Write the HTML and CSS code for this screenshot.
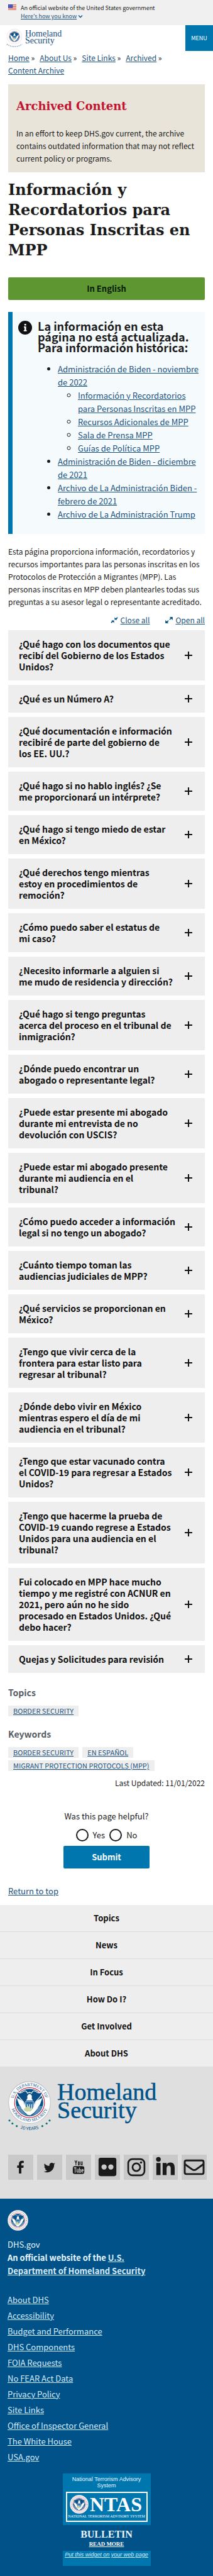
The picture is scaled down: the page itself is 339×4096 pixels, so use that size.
FILE: index.html
```html
<!DOCTYPE html>
<html lang="es">
<head>
<meta charset="utf-8">
<meta name="viewport" content="width=device-width, initial-scale=1">
<title>Información y Recordatorios para Personas Inscritas en MPP</title>
<link rel="stylesheet" href="styles.css">
</head>
<body>
<svg class="defs" aria-hidden="true">
  <symbol id="emblem" viewBox="0 0 100 100">
    <circle cx="50" cy="50" r="49" fill="#fff" stroke="#b9bfc6" stroke-width="1.5"/>
    <circle cx="50" cy="50" r="35" fill="#fff" stroke="#c41230" stroke-width="1.5"/>
    <circle cx="50" cy="50" r="32" fill="#005288"/>
    <path d="M20 39Q28 68 48 80L55 76Q40 62 34 46Z" fill="#fff"/>
    <path d="M80 39Q72 68 52 80L45 76Q60 62 66 46Z" fill="#fff"/>
    <path d="M20 58Q25 76 44 80Q33 71 29 58Z M80 58Q75 76 56 80Q67 71 71 58Z" fill="#5b8db8"/>
    <path d="M18 24Q28 31 35 24Q42 20 45 28L50 26L55 28Q58 20 65 24Q72 31 82 24Q76 37 67 45Q60 51 60 62L50 70L40 62Q40 51 33 45Q24 37 18 24Z" fill="#0b4f86" stroke="#fff" stroke-width="1.6"/>
    <path d="M45 40Q43 32 50 30Q57 31 55 40L58 45H42Z" fill="#fff"/>
    <path d="M41 47H59V60Q58 67 50 71Q42 67 41 60Z" fill="#2a6ea6" stroke="#fff"/>
    <path d="M45 54V66M50 54V70M55 54V66" stroke="#fff" stroke-width="1.8"/>
    <path d="M36 65L47 58L56 66L50 73L39 70Z" fill="#c9d8a0"/>
    <path d="M47 70L56 73L51 80L43 78Z" fill="#fff"/>
  </symbol>
</svg>

<section class="gov-banner" aria-label="Official website of the United States government">
  <svg class="flag" viewBox="0 0 16 11" aria-hidden="true">
    <path fill="#fff" d="M0 0h16v11H0z"/>
    <path fill="#db3e1f" d="M0 0h16v1H0zM0 2h16v1H0zM0 4h16v1H0zM0 6h16v1H0zM0 8h16v1H0zM0 10h16v1H0z"/>
    <path fill="#1e33b1" d="M0 0h9v7H0z"/>
    <path stroke="#fff" stroke-dasharray="1 1" stroke-width=".8" d="M1 1.5h7M1 3.5h7M1 5.5h7"/>
  </svg>
  <div>
    <div>An official website of the United States government</div>
    <a href="#know">Here's how you know</a>
    <svg class="chevron" viewBox="0 0 8 6" aria-hidden="true"><path d="M1 1.5l3 3 3-3" fill="none" stroke="#005288" stroke-width="1.3"/></svg>
  </div>
</section>

<header class="site-header" id="top">
  <a class="brand" href="#home" aria-label="Homeland Security">
    <svg class="emblem-sm" viewBox="0 0 30 34" aria-hidden="true">
      <use href="#emblem" x="2" y="1" width="26" height="26"/>
      <path d="M2 27Q15 35 28 27" fill="none" stroke="#7393ab" stroke-width="1.5" stroke-dasharray="1.5 1.5"/>
    </svg>
    <span class="brand-name">Homeland<br>Security</span>
  </a>
  <button class="menu-btn" type="button">Menu</button>
</header>

<main class="content">
  <nav class="crumbs" aria-label="Breadcrumb">
    <span><a href="#home">Home</a> »</span>
    <span><a href="#about">About Us</a> »</span>
    <span><a href="#links">Site Links</a> »</span>
    <span><a href="#archived">Archived</a> »</span>
    <span><a href="#archive">Content Archive</a></span>
  </nav>

  <aside class="archived">
    <h2>Archived Content</h2>
    <p>In an effort to keep DHS.gov current, the archive contains outdated information that may not reflect current policy or programs.</p>
  </aside>

  <h1>Información y Recordatorios para Personas Inscritas en MPP</h1>

  <a class="lang-btn" href="#english">In English</a>

  <section class="notice">
    <svg class="info" viewBox="0 0 22 22" aria-hidden="true"><circle cx="11" cy="11" r="11" fill="#111"/><path d="M9.8 5h2.8v2.4H9.8zM9 9h3.6v6h1v1.8H8.8V15h1.1v-4.2H9z" fill="#fff"/></svg>
    <div>
      <h3>La información en esta página no está actualizada. Para información histórica:</h3>
      <ul>
        <li><a href="#n22">Administración de Biden - noviembre de 2022</a>
          <ul>
            <li><a href="#i">Información y Recordatorios para Personas Inscritas en MPP</a></li>
            <li><a href="#r">Recursos Adicionales de MPP</a></li>
            <li><a href="#s">Sala de Prensa MPP</a></li>
            <li><a href="#g">Guías de Política MPP</a></li>
          </ul>
        </li>
        <li><a href="#d21">Administración de Biden - diciembre de 2021</a></li>
        <li><a href="#f21">Archivo de La Administración Biden - febrero de 2021</a></li>
        <li><a href="#t">Archivo de La Administración Trump</a></li>
      </ul>
    </div>
  </section>

  <p class="intro">Esta página proporciona información, recordatorios y recursos importantes para las personas inscritas en los Protocolos de Protección a Migrantes (MPP). Las personas inscritas en MPP deben plantearles todas sus preguntas a su asesor legal o representante acreditado.</p>

  <div class="toggles">
    <a href="#close"><svg viewBox="0 0 14 12" aria-hidden="true"><path d="M1 11l3-3M13 1l-3 3" stroke="#005288" stroke-width="2"/><path d="M1.500 6.500h5v5zM7.500 .5v5h5z" fill="#005288"/></svg><span>Close all</span></a>
    <a href="#open"><svg viewBox="0 0 14 12" aria-hidden="true"><path d="M2 10l4-3M12 2l-4 3" stroke="#005288" stroke-width="2"/><path d="M0 6v6h6zM8 0h6v6z" fill="#005288"/></svg><span>Open all</span></a>
  </div>

  <div class="accordion">
    <button type="button"><span>¿Qué hago con los documentos que recibí del Gobierno de los Estados Unidos?</span></button>
    <button type="button"><span>¿Qué es un Número A?</span></button>
    <button type="button"><span>¿Qué documentación e información recibiré de parte del gobierno de los&nbsp;EE.&nbsp;UU.?</span></button>
    <button type="button"><span>¿Qué hago si no hablo inglés? ¿Se me&nbsp;proporcionará un intérprete?</span></button>
    <button type="button"><span>¿Qué hago si tengo miedo de estar en México?</span></button>
    <button type="button"><span>¿Qué derechos tengo mientras estoy&nbsp;en procedimientos de remoción?</span></button>
    <button type="button"><span>¿Cómo puedo saber el estatus de mi&nbsp;caso?</span></button>
    <button type="button"><span>¿Necesito informarle a alguien si me&nbsp;mudo de residencia y dirección?</span></button>
    <button type="button"><span>¿Qué hago si tengo preguntas acerca&nbsp;del proceso en el tribunal de inmigración?</span></button>
    <button type="button"><span>¿Dónde puedo encontrar un abogado o representante legal?</span></button>
    <button type="button"><span>¿Puede estar presente mi abogado durante mi entrevista de no devolución con USCIS?</span></button>
    <button type="button"><span>¿Puede estar mi abogado presente durante mi audiencia en el<br>tribunal?</span></button>
    <button type="button"><span>¿Cómo puedo acceder a información legal si no tengo un abogado?</span></button>
    <button type="button"><span>¿Cuánto tiempo toman las audiencias judiciales de MPP?</span></button>
    <button type="button"><span>¿Qué servicios se proporcionan en México?</span></button>
    <button type="button"><span>¿Tengo que vivir cerca de la frontera&nbsp;para estar listo para regresar al tribunal?</span></button>
    <button type="button"><span>¿Dónde debo vivir en México mientras espero el día de mi audiencia en el tribunal?</span></button>
    <button type="button"><span>¿Tengo que estar vacunado contra el&nbsp;COVID-19 para regresar a Estados Unidos?</span></button>
    <button type="button"><span>¿Tengo que hacerme la prueba de COVID-19 cuando regrese a Estados Unidos para una audiencia en el tribunal?</span></button>
    <button type="button"><span>Fui colocado en MPP hace mucho tiempo y me registré con ACNUR en 2021, pero aún no he sido procesado en Estados Unidos. ¿Qué debo hacer?</span></button>
    <button type="button"><span>Quejas y Solicitudes para revisión</span></button>
  </div>

  <section class="tags">
    <h4>Topics</h4>
    <div class="tag-list"><a href="#bs">Border Security</a></div>
    <h4>Keywords</h4>
    <div class="tag-list"><a href="#bs">Border Security</a><a href="#es">En Español</a><a href="#mpp">Migrant Protection Protocols (MPP)</a></div>
  </section>
  <p class="updated">Last Updated: 11/01/2022</p>

  <form class="feedback">
    <fieldset>
      <legend>Was this page helpful?</legend>
      <div class="choices">
        <label><input type="radio" name="helpful" value="yes">Yes</label>
        <label><input type="radio" name="helpful" value="no">No</label>
      </div>
    </fieldset>
    <button type="button">Submit</button>
  </form>

  <a class="to-top" href="#top">Return to top</a>
</main>

<footer>
  <nav class="foot-nav" aria-label="Footer">
    <a href="#topics">Topics</a>
    <a href="#news">News</a>
    <a href="#focus">In Focus</a>
    <a href="#how">How Do I?</a>
    <a href="#involved">Get Involved</a>
    <a href="#about">About DHS</a>
  </nav>

  <div class="foot-brand">
    <div class="lockup">
      <svg class="emblem-lg" viewBox="0 0 100 120" role="img" aria-label="Department of Homeland Security, 20 years">
        <defs>
          <path id="arc-top" d="M13.500 62a38.500 38.500 0 1 1 73 0"/>
          <path id="arc-low" d="M5.500 50a44.500 44.500 0 0 0 89 0"/>
          <path id="arc-years" d="M13 104Q50 125 87 104"/>
        </defs>
        <use href="#emblem" width="100" height="100"/>
        <g fill="#005288" font-family="Liberation Serif, serif" font-size="10" text-anchor="middle">
          <text><textPath href="#arc-top" startOffset="50%">U.S. DEPARTMENT OF</textPath></text>
          <text><textPath href="#arc-low" startOffset="50%">HOMELAND SECURITY</textPath></text>
        </g>
        <text fill="#005288" font-family="Lato, sans-serif" font-size="10" text-anchor="middle"><textPath href="#arc-years" startOffset="50%">20 YEARS</textPath></text>
        <g fill="#00707d"><circle cx="3" cy="92" r="2.300"/><circle cx="10" cy="99" r="2.300"/><circle cx="20" cy="105" r="2.300"/><circle cx="97" cy="92" r="2.300"/><circle cx="90" cy="99" r="2.300"/><circle cx="80" cy="105" r="2.300"/></g>
      </svg>
      <div class="lockup-name">Homeland<br>Security</div>
    </div>
    <div class="social">
      <a href="#fb" aria-label="Facebook"><svg viewBox="0 0 48 48"><path d="M29.800 12v4h-2.400c-1.800 0-2.200.9-2.200 2.200v2.500h4.400l-.6 4.500h-3.800V36h-4.700V25.200h-3.300v-4.500h3.300v-3.100c0-3.800 2.400-5.900 5.800-5.900 1.700 0 3 .1 3.500.3z"/></svg></a>
      <a href="#tw" aria-label="Twitter"><svg viewBox="0 0 48 48"><path d="M35 16.500c-.8 1.100-1.500 1.900-2.400 2.500C33 28 26 34 19.500 34c-2.600 0-4.700-.7-6.500-1.900 2.400.2 4.700-.5 6.300-1.900-2-.1-3.500-1.400-4.100-3.200h2c-2.100-.6-3.500-2.300-3.500-4.500.6.300 1.200.5 2 .5-2.100-1.600-2.500-3.900-1.400-6 2.400 2.800 5.500 4.500 9.300 4.700-.8-3.500 1.500-6.200 4.500-6.200 1.300 0 2.500.5 3.300 1.400 1-.2 2-.6 2.900-1.100-.4 1.100-1 1.900-1.900 2.500.9-.1 1.800-.4 2.600-1.800z"/></svg></a>
      <a href="#yt" aria-label="YouTube"><svg viewBox="0 0 48 48"><rect x="13" y="22" width="22" height="15" rx="4"/><path d="M17 11l2 5v4M21 11l-2 5M23.500 14v5q1 2 2 0v-5q-1-1.500-2 0M28.500 13v6q1.500 1 2.500-.5V13v7" fill="none" stroke="#1b1b1b" stroke-width="1.500"/><path d="M15 25h5M17.500 25v9.500M21 27v6q1.300 1.500 2.500-.5V27v7.500M26 24.500v9.500q2.500.5 2.500-2v-2.500q-1-2-2.500 0M33 33q-2.500 1.500-2.500-1v-3q1.300-2 2.500 0v1.500h-2.500" fill="none" stroke="#d0d0d0" stroke-width="1.300"/></svg></a>
      <a href="#fl" aria-label="Flickr"><svg viewBox="0 0 48 48"><path fill-rule="evenodd" d="M11 6h26q4 0 4 4v27q0 4-4 4H11q-4 0-4-4V10q0-4 4-4zM17.500 18.500a5 5 0 1 0 .1 0zM30.500 18.500a5 5 0 1 0 .1 0z"/></svg></a>
      <a href="#ig" aria-label="Instagram"><svg viewBox="0 0 48 48"><g fill="none" stroke="#1b1b1b" stroke-width="3.200"><rect x="8.500" y="8.500" width="31" height="31" rx="8"/><circle cx="24" cy="24" r="7.300"/></g><circle cx="33" cy="15" r="2.200"/></svg></a>
      <a href="#li" aria-label="LinkedIn"><svg viewBox="0 0 48 48"><circle cx="11" cy="9" r="4.500"/><path d="M7 16h8v23H7zM19 16h7.500v3q2.500-4 7.500-4 8 0 8 10v14h-7.500V27q0-6-4-6t-4 6v12H19z"/></svg></a>
      <a href="#mail" aria-label="Email"><svg viewBox="0 0 48 48"><g fill="none" stroke="#1b1b1b" stroke-width="3.500"><rect x="6" y="11" width="36" height="26" rx="3"/><path d="M6 18l14 10q4 3 8 0l14-10"/></g></svg></a>
    </div>
  </div>

  <div class="identifier">
    <svg class="emblem-id" viewBox="0 0 100 100" aria-hidden="true"><use href="#emblem"/><circle cx="50" cy="50" r="42" fill="none" stroke="#bb7b8a" stroke-width="4" stroke-dasharray="3 4"/></svg>
    <p>DHS.gov</p>
    <p><strong>An official website of the <a href="#dhs">U.S. Department of Homeland Security</a></strong></p>
    <ul>
      <li><a href="#1">About DHS</a></li>
      <li><a href="#2">Accessibility</a></li>
      <li><a href="#3">Budget and Performance</a></li>
      <li><a href="#4">DHS Components</a></li>
      <li><a href="#5">FOIA Requests</a></li>
      <li><a href="#6">No FEAR Act Data</a></li>
      <li><a href="#7">Privacy Policy</a></li>
      <li><a href="#8">Site Links</a></li>
      <li><a href="#9">Office of Inspector General</a></li>
      <li><a href="#10">The White House</a></li>
      <li><a href="#11">USA.gov</a></li>
    </ul>
    <div class="ntas">
      <div class="ntas-head">
        <div class="ntas-title">National Terrorism Advisory System</div>
        <div class="ntas-card">
          <svg viewBox="0 0 100 100" aria-hidden="true"><use href="#emblem"/><circle cx="50" cy="50" r="42" fill="none" stroke="#bb7b8a" stroke-width="4" stroke-dasharray="3 4"/></svg>
          <span class="ntas-word">NTAS</span>
          <span class="ntas-sub">NATIONAL TERRORISM ADVISORY SYSTEM</span>
        </div>
      </div>
      <div class="ntas-body">
        <div class="bulletin">BULLETIN</div>
        <a href="#more">READ MORE</a>
      </div>
      <div class="ntas-foot"><a href="#widget">Put this widget on your web page</a></div>
    </div>
  </div>
</footer>
</body>
</html>
```
FILE: styles.css
```css
* { box-sizing: border-box; }
body {
  margin: 0;
  background: #fff;
  color: #1b1b1b;
  font-family: "Noto Sans CJK SC", "Open Sans", sans-serif;
  font-size: 12px;
  line-height: 20px;
}
h1, h2, h3, h4, p, ul, fieldset { margin: 0; padding: 0; }
a { color: #1a5380; }
button { font-family: inherit; border: 0; cursor: pointer; }
.defs { display: none; }

.gov-banner {
  display: flex;
  gap: 7px;
  padding: 6px 13px 8px;
  background: #f0f0f0;
  font-size: 9px;
  line-height: 13px;
}
.flag { width: 13px; height: 9px; margin-top: 1px; flex: none; }
.chevron { width: 8px; height: 6px; }

.site-header {
  display: flex;
  justify-content: space-between;
  height: 41px;
}
.brand {
  display: flex;
  gap: 3px;
  padding: 5px 0 0 9px;
  color: #164f82;
  text-decoration: none;
}
.emblem-sm { width: 28px; height: 32px; }
.brand-name {
  padding-top: 3px;
  font-family: "Liberation Serif", serif;
  font-size: 14px;
  line-height: 11px;
}
.menu-btn {
  width: 44px;
  padding: 0;
  background: #0076ae;
  color: #fff;
  font-size: 9px;
  text-transform: uppercase;
}

.content { padding: 0 13px; }
.crumbs {
  display: flex;
  flex-wrap: wrap;
  column-gap: 8px;
  padding: 1px 0 12px;
}

.archived {
  padding: 22px 13px 12px;
  background: #e8e4da;
}
.archived h2 {
  margin-bottom: 20px;
  color: #c41230;
  font-family: "DejaVu Serif", serif;
  font-size: 18px;
  line-height: 26px;
}

h1 {
  margin: 12px 0 27px;
  font-family: "DejaVu Serif", serif;
  font-size: 24px;
  line-height: 32px;
}

.lang-btn {
  display: block;
  padding: 8px;
  border-radius: 2px;
  background: #5e9732;
  color: #071b07;
  font-size: 13px;
  font-weight: bold;
  text-align: center;
  text-decoration: none;
}

.notice {
  display: flex;
  gap: 9px;
  margin-top: 19px;
  padding: 14px 8px 21px 9px;
  border-left: 7px solid #0076ae;
  background: #f5fafd;
}
.info { width: 22px; height: 22px; flex: none; }
.notice h3 {
  padding-right: 12px;
  margin-bottom: 15px;
  font-size: 18px;
  line-height: 17px;
}
.notice ul {
  padding-left: 32px;
  font-size: 13px;
  line-height: 21px;
}

.intro { margin: 18px 0 9px; }

.toggles {
  display: flex;
  justify-content: flex-end;
  gap: 25px;
  margin-bottom: 6px;
}
.toggles a { display: flex; align-items: center; gap: 4px; text-decoration: none; }
.toggles span { text-decoration: underline; }
.toggles svg { width: 12px; height: 10px; }

.accordion { display: grid; gap: 7px; }
.accordion button {
  display: flex;
  align-items: center;
  justify-content: space-between;
  gap: 14px;
  padding: 13px 20px 13px 17px;
  background: #eee;
  color: #111;
  font-size: 14px;
  font-weight: bold;
  line-height: 18px;
  text-align: left;
}
.accordion button::after {
  content: "";
  flex: none;
  width: 12px;
  height: 12px;
  background:
    linear-gradient(#111, #111) center / 12px 2px no-repeat,
    linear-gradient(#111, #111) center / 2px 12px no-repeat;
}

.tags {
  display: grid;
  gap: 11px;
  padding: 21px 0 9px;
}
.tags h4 {
  color: #565c65;
  font-size: 14px;
  line-height: 20px;
}
.tag-list {
  display: flex;
  flex-wrap: wrap;
  gap: 4px 6px;
}
.tag-list + h4 { margin-top: 7px; }
.tag-list a {
  padding: 0 8px;
  background: #eee;
  font-size: 11px;
  line-height: 17px;
  text-transform: uppercase;
}
.updated { text-align: right; }

.feedback {
  display: flex;
  flex-direction: column;
  align-items: center;
  padding-top: 33px;
  font-size: 13px;
}
.feedback fieldset { border: 0; text-align: center; }
.feedback legend { padding: 0; }
.choices { display: flex; justify-content: center; gap: 7px; padding: 10px 0 7px; }
.choices label { display: flex; align-items: center; gap: 7px; }
.choices input {
  appearance: none;
  width: 20px;
  height: 20px;
  margin: 0;
  border: 2px solid #1b1b1b;
  border-radius: 50%;
  background: #fff;
}
.feedback button {
  width: 137px;
  padding: 8px;
  border-radius: 2px;
  background: #0076ae;
  color: #fff;
  font-size: 13px;
  font-weight: bold;
  line-height: 20px;
}
.to-top { display: inline-block; margin: 26px 0 12px; font-size: 13px; }

.foot-nav { display: grid; background: #eee; }
.foot-nav a {
  padding: 12px;
  color: #111;
  font-size: 13px;
  font-weight: bold;
  line-height: 18px;
  text-align: center;
  text-decoration: none;
}
.foot-nav a + a { border-top: 1px solid #d9dbdd; }

.foot-brand { padding: 23px 10px 30px 13px; background: #dfdfdf; }
.lockup { display: flex; gap: 10px; height: 117px; }
.emblem-lg { width: 68px; height: 82px; overflow: visible; }
.lockup-name {
  padding-top: 3px;
  color: #005288;
  font-family: "Liberation Serif", serif;
  font-size: 38px;
  line-height: 29px;
  -webkit-text-stroke: 0.5px;
}
.social { display: grid; grid-template-columns: repeat(7, 1fr); gap: 6px; }
.social a { display: flex; background: #c9c9c9; }
.social svg { width: 100%; fill: #1b1b1b; }

.identifier {
  padding: 18px 12px 16px;
  background: #005288;
  color: #e8f5ff;
  font-size: 13px;
  line-height: 21px;
}
.identifier p { padding-right: 80px; }
.identifier a { color: #d5ebfa; }
.emblem-id { display: block; width: 33px; height: 33px; margin-bottom: 11px; }
.identifier ul { display: grid; gap: 4px; margin: 25px 0 16px; list-style: none; }

.ntas {
  width: 140px;
  margin: 0 auto;
  font-family: "Liberation Sans", sans-serif;
  font-size: 9px;
  line-height: 10px;
  text-align: center;
}
.ntas-head { padding: 4px 5px 5px; background: #0076ae; }
.ntas-title { padding: 0 8px; }
.ntas-card {
  display: grid;
  grid-template-columns: 30px 1fr;
  align-items: center;
  margin-top: 5px;
  padding: 3px 1px;
  border: 2px solid #fff;
  color: #fff;
  font-family: "Liberation Serif", serif;
}
.ntas-card svg { width: 30px; height: 30px; margin-left: 3px; }
.ntas-word { font-size: 32px; font-weight: bold; line-height: 30px; }
.ntas-sub { grid-column: 1 / 3; font-size: 6px; line-height: 8px; white-space: nowrap; }
.ntas-body { padding: 6px 0 5px; font-family: "Liberation Serif", serif; font-weight: bold; }
.bulletin { font-size: 16px; line-height: 18px; }
.ntas-body a { display: block; font-size: 9px; line-height: 12px; color: #fff; }
.ntas-foot { padding: 1px 0 13px; background: #0076ae; font-style: italic; }
```
